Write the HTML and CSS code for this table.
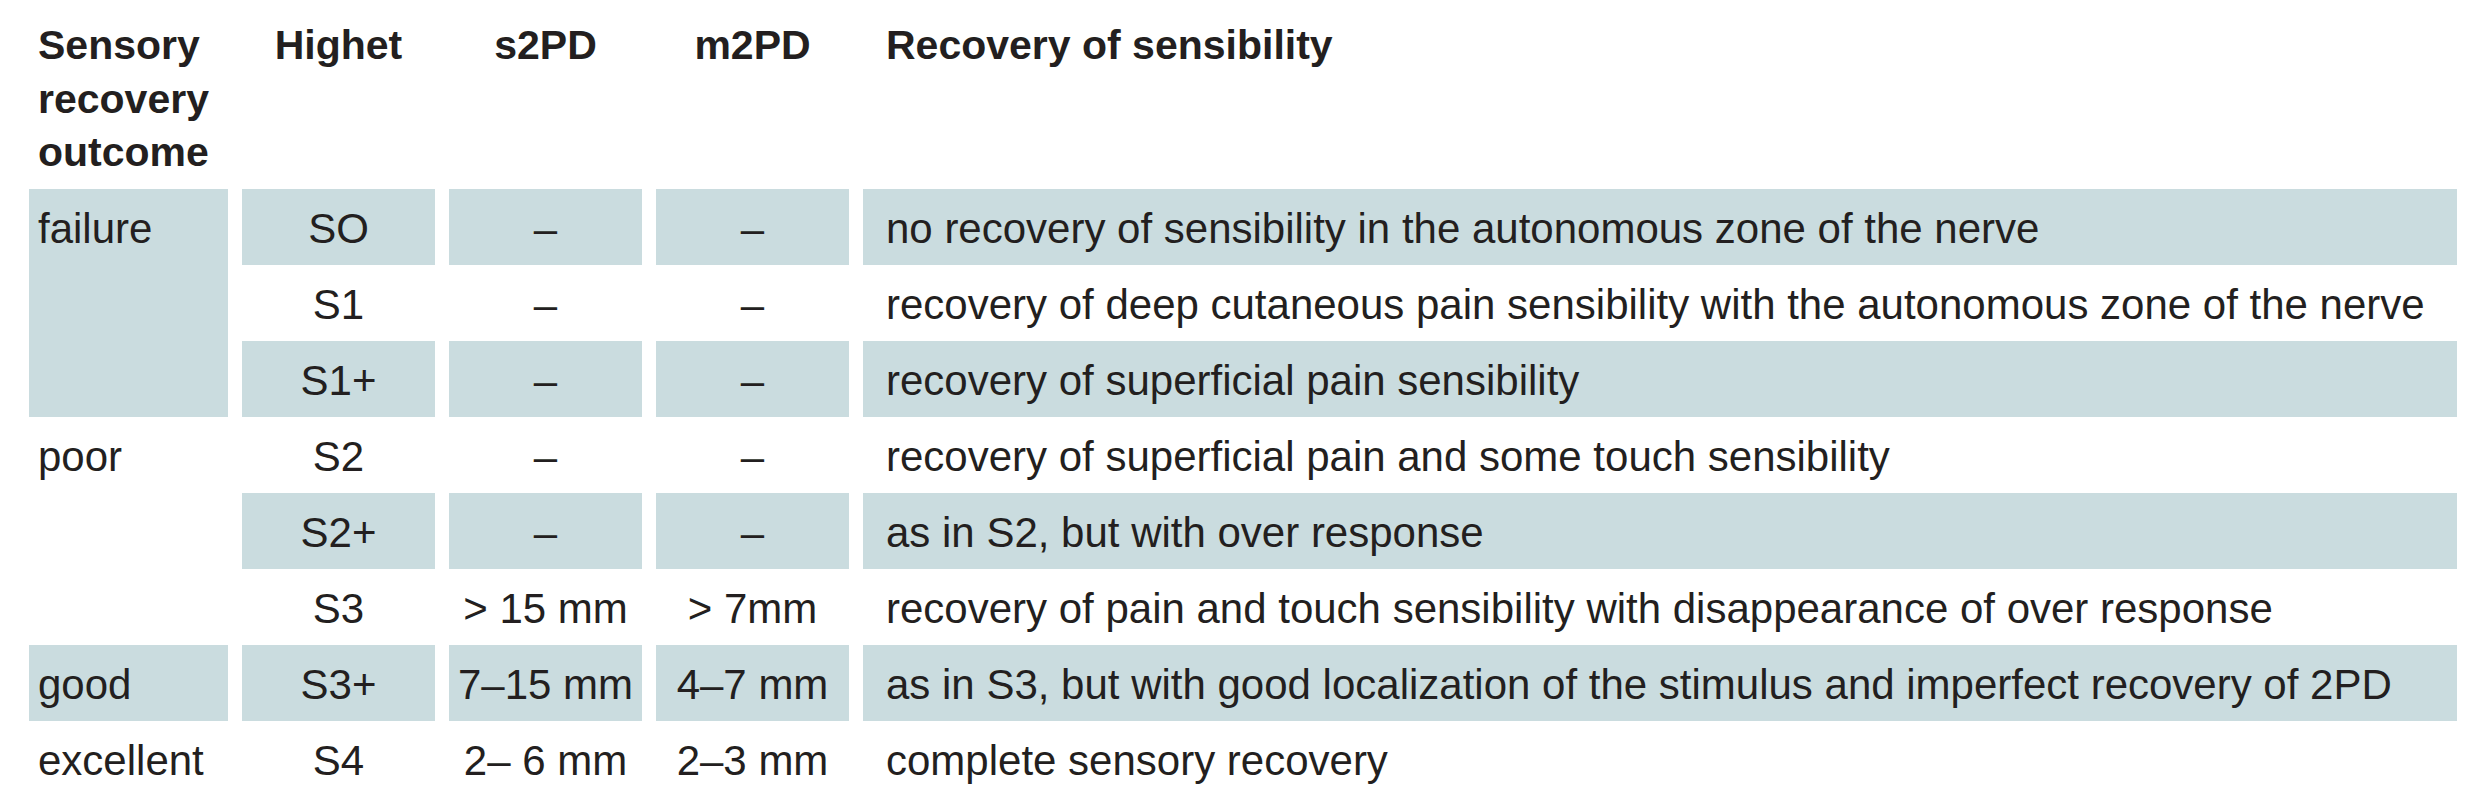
FILE: index.html
```html
<!DOCTYPE html>
<html lang="en">
<head>
<meta charset="utf-8">
<title>Sensory recovery grading</title>
<link rel="stylesheet" href="styles.css">
</head>
<body>
<table class="grading">
  <colgroup>
    <col class="w-outcome">
    <col class="w-num">
    <col class="w-num">
    <col class="w-num">
    <col class="w-desc">
  </colgroup>
  <thead>
    <tr class="head-row">
      <th class="left">Sensory<br>recovery<br>outcome</th>
      <th>Highet</th>
      <th>s2PD</th>
      <th>m2PD</th>
      <th class="desc">Recovery of sensibility</th>
    </tr>
  </thead>
  <tbody>
    <tr>
      <td class="left shade" rowspan="3">failure</td>
      <td class="shade">SO</td>
      <td class="shade">–</td>
      <td class="shade">–</td>
      <td class="desc shade">no recovery of sensibility in the autonomous zone of the nerve</td>
    </tr>
    <tr>
      <td>S1</td>
      <td>–</td>
      <td>–</td>
      <td class="desc">recovery of deep cutaneous pain sensibility with the autonomous zone of the nerve</td>
    </tr>
    <tr>
      <td class="shade">S1+</td>
      <td class="shade">–</td>
      <td class="shade">–</td>
      <td class="desc shade">recovery of superficial pain sensibility</td>
    </tr>
    <tr>
      <td class="left" rowspan="3">poor</td>
      <td>S2</td>
      <td>–</td>
      <td>–</td>
      <td class="desc">recovery of superficial pain and some touch sensibility</td>
    </tr>
    <tr>
      <td class="shade">S2+</td>
      <td class="shade">–</td>
      <td class="shade">–</td>
      <td class="desc shade">as in S2, but with over response</td>
    </tr>
    <tr>
      <td>S3</td>
      <td>&gt; 15 mm</td>
      <td>&gt; 7mm</td>
      <td class="desc">recovery of pain and touch sensibility with disappearance of over response</td>
    </tr>
    <tr>
      <td class="left shade">good</td>
      <td class="shade">S3+</td>
      <td class="shade">7–15 mm</td>
      <td class="shade">4–7 mm</td>
      <td class="desc shade">as in S3, but with good localization of the stimulus and imperfect recovery of 2PD</td>
    </tr>
    <tr>
      <td class="left">excellent</td>
      <td>S4</td>
      <td>2– 6 mm</td>
      <td>2–3 mm</td>
      <td class="desc">complete sensory recovery</td>
    </tr>
  </tbody>
</table>
</body>
</html>
```

FILE: styles.css
```css
html, body {
  margin: 0;
  padding: 0;
  background: #ffffff;
}

body {
  font-family: "Liberation Sans", Arial, sans-serif;
  color: #231f20;
}

.grading {
  table-layout: fixed;
  border-collapse: separate;
  border-spacing: 14px 0;
  margin-left: 15px;
  width: 2456px;
}

.w-outcome { width: 199px; }
.w-num { width: 193px; }
.w-desc { width: 1594px; }

.grading th,
.grading td {
  padding: 0;
  text-align: center;
  vertical-align: top;
  white-space: nowrap;
}

.head-row {
  height: 189px;
}

.grading th {
  font-size: 41px;
  font-weight: 700;
  line-height: 53.5px;
  padding-top: 19px;
}

.grading tbody tr {
  height: 76px;
}

.grading td {
  font-size: 42px;
  line-height: 48px;
  padding-top: 16px;
}

.grading .left {
  text-align: left;
  padding-left: 9px;
}

.grading .desc {
  text-align: left;
  padding-left: 23px;
}

.shade {
  background: #cadcdf;
}
```
